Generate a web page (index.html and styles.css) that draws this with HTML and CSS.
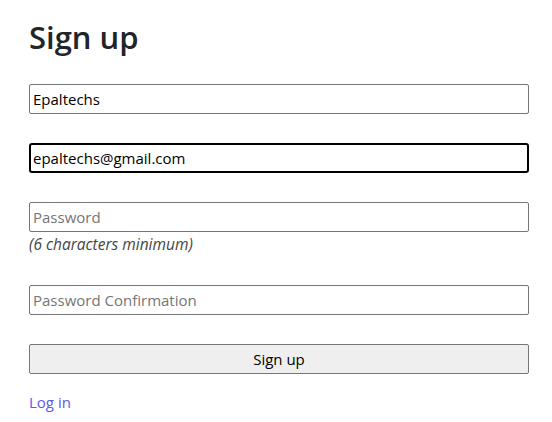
FILE: index.html
```html
<!DOCTYPE html>
<html lang="en">
<head>
<meta charset="utf-8">
<title>Sign up</title>
<link rel="stylesheet" href="styles.css">
</head>
<body>
<main class="page">
  <h1 class="title">Sign up</h1>
  <form class="form">
    <div class="field">
      <input class="input" type="text" value="Epaltechs">
    </div>
    <div class="field">
      <input class="input input-focus" type="email" value="epaltechs@gmail.com">
    </div>
    <div class="field">
      <input class="input" type="password" placeholder="Password">
      <em class="hint">(6 characters minimum)</em>
    </div>
    <div class="field">
      <input class="input" type="password" placeholder="Password Confirmation">
    </div>
    <div class="field">
      <button class="btn" type="button">Sign up</button>
    </div>
  </form>
  <a class="link" href="#">Log in</a>
</main>
</body>
</html>
```
FILE: styles.css
```css
html, body {
  margin: 0;
  padding: 0;
  background: #fff;
}
body {
  font-family: "Open Sans", "Noto Sans", sans-serif;
  color: #212529;
  font-size: 15px;
  line-height: 1.5;
}
.page {
  padding: 16px 23px 0 29px;
  display: flex;
  flex-direction: column;
}
.title {
  font-size: 31px;
  font-weight: 600;
  margin: 0 0 26px;
  line-height: 42px;
}
.form {
  display: flex;
  flex-direction: column;
  gap: 29px;
}
.field {
  display: flex;
  flex-direction: column;
}
.input {
  box-sizing: border-box;
  width: 100%;
  height: 30px;
  border: 1px solid #767676;
  border-radius: 2px;
  padding: 0 3px;
  font-family: inherit;
  font-size: 15px;
  color: #000;
  background: #fff;
  outline: none;
}
.input::placeholder {
  color: #757575;
}
.input-focus {
  border: 2px solid #000;
  border-radius: 3px;
  padding: 0 2px;
}
.hint {
  font-style: italic;
  font-size: 15.5px;
  color: #444;
  line-height: 24px;
  margin-top: 0;
}
.btn {
  box-sizing: border-box;
  width: 100%;
  height: 30px;
  border: 1px solid #767676;
  border-radius: 2px;
  background: #efefef;
  font-family: inherit;
  font-size: 15px;
  color: #000;
  padding: 0;
}
.link {
  margin-top: 16px;
  align-self: flex-start;
  color: #5a5af0;
  text-decoration: none;
  line-height: 24px;
}
```
